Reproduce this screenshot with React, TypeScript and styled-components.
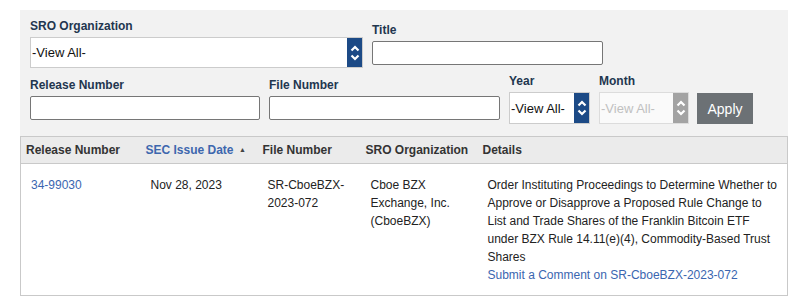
import React from "react";
import styled, { createGlobalStyle } from "styled-components";

const GlobalStyle = createGlobalStyle`
  body {
    margin: 0;
    background: #fff;
    font-family: "Liberation Sans", Arial, sans-serif;
    color: #333;
  }
`;

interface Row {
  release: string;
  date: string;
  file: string;
  org: string;
  details: string;
}

const rows: Row[] = [
  {
    release: "34-99030",
    date: "Nov 28, 2023",
    file: "SR-CboeBZX-2023-072",
    org: "Cboe BZX Exchange, Inc. (CboeBZX)",
    details:
      "Order Instituting Proceedings to Determine Whether to Approve or Disapprove a Proposed Rule Change to List and Trade Shares of the Franklin Bitcoin ETF under BZX Rule 14.11(e)(4), Commodity-Based Trust Shares",
  },
];

function Chevrons() {
  return (
    <svg width="10" height="18" viewBox="0 0 10 18">
      <path d="M1.5 6.5 L5 3 L8.5 6.5" fill="none" stroke="#fff" strokeWidth="2.2" />
      <path d="M1.5 11.5 L5 15 L8.5 11.5" fill="none" stroke="#fff" strokeWidth="2.2" />
    </svg>
  );
}

function Dropdown({ width, disabled }: { width: number; disabled?: boolean }) {
  return (
    <SelectBox $width={width} $disabled={disabled}>
      <SelectInput disabled={disabled} $disabled={disabled}>
        <option>-View All-</option>
      </SelectInput>
      <ArrowBox $disabled={disabled}>
        <Chevrons />
      </ArrowBox>
    </SelectBox>
  );
}

export default function App() {
  return (
    <>
      <GlobalStyle />
      <Page>
        <FilterPanel>
          <FilterRow>
            <Field>
              <Label>SRO Organization</Label>
              <Dropdown width={333} />
            </Field>
            <Field>
              <Label>Title</Label>
              <TextInput $width={231} />
            </Field>
          </FilterRow>
          <FilterRow>
            <Field>
              <Label>Release Number</Label>
              <TextInput $width={230} />
            </Field>
            <Field>
              <Label>File Number</Label>
              <TextInput $width={231} />
            </Field>
            <Field>
              <Label>Year</Label>
              <Dropdown width={81} />
            </Field>
            <Field>
              <Label>Month</Label>
              <Dropdown width={90} disabled />
            </Field>
            <ApplyButton>Apply</ApplyButton>
          </FilterRow>
        </FilterPanel>

        <Results>
          <colgroup>
            <col style={{ width: 120 }} />
            <col style={{ width: 117 }} />
            <col style={{ width: 103 }} />
            <col style={{ width: 117 }} />
            <col />
          </colgroup>
          <thead>
            <tr>
              <Th>Release Number</Th>
              <Th $sorted>
                SEC Issue Date <SortMark>▲</SortMark>
              </Th>
              <Th>File Number</Th>
              <Th>SRO Organization</Th>
              <Th>Details</Th>
            </tr>
          </thead>
          <tbody>
            {rows.map((r) => (
              <tr key={r.release}>
                <Td>
                  <Link href="#">{r.release}</Link>
                </Td>
                <Td>{r.date}</Td>
                <Td>{r.file}</Td>
                <Td>{r.org}</Td>
                <Td $wide>
                  {r.details}
                  <br />
                  <Link href="#">Submit a Comment on {r.file}</Link>
                </Td>
              </tr>
            ))}
          </tbody>
        </Results>
      </Page>
    </>
  );
}

const Page = styled.div`
  width: 768px;
  margin: 10px 0 0 20px;
`;

const FilterPanel = styled.div`
  background: #f2f2f2;
  padding: 9px 10px 12px;
  display: flex;
  flex-direction: column;
  gap: 6px;
`;

const FilterRow = styled.div`
  display: flex;
  align-items: center;
  gap: 9px;
`;

const Field = styled.div`
  display: flex;
  flex-direction: column;
`;

const Label = styled.label`
  font-size: 12px;
  font-weight: bold;
  line-height: 14px;
  color: #22364f;
  margin-bottom: 4px;
`;

const TextInput = styled.input<{ $width: number }>`
  box-sizing: border-box;
  width: ${(p) => p.$width}px;
  height: 24px;
  border: 1px solid #767676;
  border-radius: 2px;
  background: #fff;
  margin: 0;
  padding: 0 4px;
  font: 13px "Liberation Sans", Arial, sans-serif;
`;

const SelectBox = styled.div<{ $width: number; $disabled?: boolean }>`
  box-sizing: border-box;
  width: ${(p) => p.$width}px;
  height: ${(p) => (p.$width > 200 ? 31 : 32)}px;
  display: flex;
  border: 1px solid ${(p) => (p.$disabled ? "#dcdcdc" : "#cccccc")};
  background: ${(p) => (p.$disabled ? "#fafafa" : "#fff")};
`;

const SelectInput = styled.select<{ $disabled?: boolean }>`
  appearance: none;
  flex: 1;
  min-width: 0;
  border: none;
  background: transparent;
  margin: 0;
  padding: 0 0 0 1px;
  font: 13px "Liberation Sans", Arial, sans-serif;
  color: ${(p) => (p.$disabled ? "#a8a8a8" : "#111")};
  outline: none;
`;

const ArrowBox = styled.span<{ $disabled?: boolean }>`
  width: 15px;
  flex: none;
  display: flex;
  align-items: center;
  justify-content: center;
  background: ${(p) => (p.$disabled ? "#a3a3a3" : "#1c4a86")};
`;

const ApplyButton = styled.button`
  width: 56px;
  height: 31px;
  margin: 0 0 0 -1px;
  align-self: flex-end;
  border: none;
  background: #6c7175;
  color: #fff;
  font: 14px "Liberation Sans", Arial, sans-serif;
  padding: 0;
`;

const Results = styled.table`
  width: 768px;
  table-layout: fixed;
  border-collapse: collapse;
  border: 1px solid #c9c9c9;
  font-size: 12px;
  line-height: 18px;
`;

const Th = styled.th<{ $sorted?: boolean }>`
  text-align: left;
  height: 26px;
  padding: 0 5px;
  background: #ebebeb;
  border-bottom: 1px solid #c9c9c9;
  font-weight: bold;
  color: ${(p) => (p.$sorted ? "#3d67ae" : "#333")};
  white-space: nowrap;
`;

const SortMark = styled.span`
  font-size: 7px;
  color: #444;
  vertical-align: middle;
  margin-left: 2px;
`;

const Td = styled.td<{ $wide?: boolean }>`
  vertical-align: top;
  padding: 12px ${(p) => (p.$wide ? 4 : 10)}px 11px 10px;
  color: #222;
`;

const Link = styled.a`
  color: #3a66b0;
  text-decoration: none;
`;
